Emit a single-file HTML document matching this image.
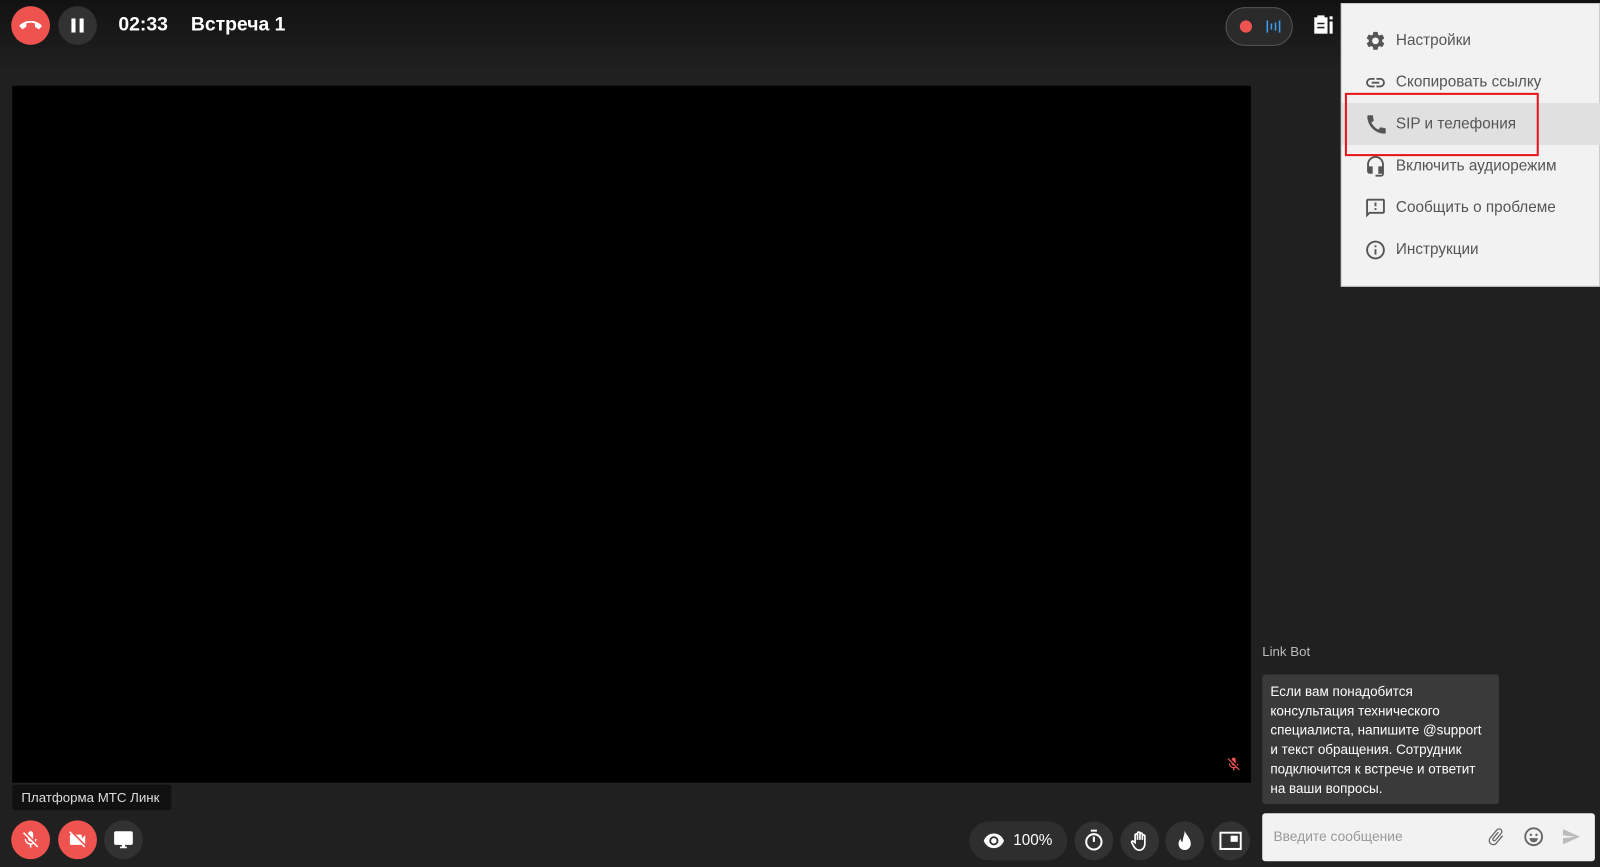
<!DOCTYPE html>
<html><head><meta charset="utf-8"><style>
*{margin:0;padding:0;box-sizing:border-box}
html,body{width:1600px;height:867px;overflow:hidden;background:#202020}
#w{position:absolute;left:0;top:0;width:1568px;height:850px;transform:scale(1.0204);transform-origin:0 0;font-family:"Liberation Sans",Arial,sans-serif}
.top{position:absolute;left:0;top:0;width:1568px;height:70px;background:linear-gradient(#121212,#202020)}
.ab{position:absolute}
.c{position:absolute;border-radius:50%;display:flex;align-items:center;justify-content:center}
.red{background:#ef5350}.dk{background:#323232}
.menu{position:absolute;left:1314px;top:3px;width:254px;height:278px;background:#f2f2f2;border:1px solid #ccc}
.mi{position:absolute;left:0;width:254px;height:41px;display:flex;align-items:center;font-size:15px;color:#555}
.mi svg{position:absolute;left:22px}
.mi span{position:absolute;left:53px}
</style></head><body><div id="w">
<div class="top"></div>
<div class="c red" style="left:11px;top:6px;width:38px;height:38px"><svg width="22" height="22" viewBox="0 0 24 24"><path fill="#fff" d="M12 9c-1.6 0-3.15.25-4.6.72v3.1c0 .39-.23.74-.56.9-.98.49-1.870 1.120-2.66 1.85-.18.18-.43.28-.7.28-.28 0-.53-.11-.71-.29L.29 13.08a.956.956 0 010-1.36C3.34 8.78 7.46 7 12 7s8.66 1.78 11.710 4.72c.18.18.29.44.29.71 0 .28-.11.53-.29.71l-2.48 2.48c-.18.18-.43.29-.71.29-.27 0-.52-.11-.7-.28a11.3 11.3 0 00-2.67-1.85.996.996 0 01-.56-.9v-3.1C15.15 9.25 13.6 9 12 9z"/></svg></div>
<div class="c dk" style="left:57px;top:6px;width:38px;height:38px"><svg width="14" height="14"><rect x="1" y="0" width="4" height="14" fill="#fff"/><rect x="9" y="0" width="4" height="14" fill="#fff"/></svg></div>
<div class="ab" style="left:116px;top:14px;color:#fff;font-weight:bold;font-size:19px">02:33</div>
<div class="ab" style="left:187px;top:14px;color:#fff;font-weight:bold;font-size:19px">Встреча 1</div>
<div class="ab" style="left:1201px;top:7px;width:66px;height:38px;border-radius:19px;background:#2a2a2a;border:1px solid #555"></div>
<div class="c" style="left:1215px;top:20px;width:12px;height:12px;background:#ef5350"></div>
<svg class="ab" style="left:1240px;top:18px" width="16" height="16"><g stroke="#3d9cf0" stroke-width="1.5"><line x1="2" y1="2" x2="2" y2="14"/><line x1="6" y1="5" x2="6" y2="11"/><line x1="10" y1="4" x2="10" y2="12"/><line x1="14" y1="2" x2="14" y2="14"/></g></svg>
<svg class="ab" style="left:1287px;top:15px" width="22" height="20"><rect x="1" y="2" width="13" height="16" fill="#fff"/><rect x="4" y="0" width="7" height="4" fill="#fff"/><g stroke="#222" stroke-width="1.5"><line x1="4" y1="8" x2="11" y2="8"/><line x1="4" y1="12" x2="11" y2="12"/></g><rect x="16" y="1" width="3" height="3" fill="#fff"/><rect x="16" y="6" width="3" height="12" fill="#fff"/></svg>
<div class="ab" style="left:12px;top:84px;width:1214px;height:683px;background:#000"></div>
<svg class="ab" style="left:1201px;top:741px" width="16" height="16" viewBox="0 0 24 24"><path fill="#ef5350" d="M19 11h-1.7c0 .74-.16 1.43-.43 2.05l1.23 1.23c.56-.98.9-2.090.9-3.28zm-4.02.17c0-.06.02-.11.02-.17V5c0-1.66-1.34-3-3-3S9 3.34 9 5v.18l5.98 5.99zM4.27 3L3 4.27l6.01 6.01V11c0 1.66 1.33 3 2.99 3 .22 0 .44-.03.65-.08l1.66 1.66c-.71.33-1.5.52-2.31.52-2.76 0-5.3-2.1-5.3-5.1H5c0 3.41 2.72 6.23 6 6.72V21h2v-3.28c.91-.13 1.77-.45 2.54-.9L19.73 21 21 19.73 4.27 3z"/></svg>
<div class="ab" style="left:12px;top:769px;width:156px;height:25px;background:#111;border-radius:3px;color:#ddd;font-size:13px;padding:5px 0 0 9px">Платформа МТС Линк</div>
<div class="c red" style="left:11px;top:804px;width:38px;height:38px"><svg width="20" height="20" viewBox="0 0 24 24"><path fill="#fff" d="M19 11h-1.7c0 .74-.16 1.43-.43 2.05l1.23 1.23c.56-.98.9-2.090.9-3.28zm-4.02.17c0-.06.02-.11.02-.17V5c0-1.66-1.34-3-3-3S9 3.34 9 5v.18l5.98 5.99zM4.27 3L3 4.27l6.01 6.01V11c0 1.66 1.33 3 2.99 3 .22 0 .44-.03.65-.08l1.66 1.66c-.71.33-1.5.52-2.31.52-2.76 0-5.3-2.1-5.3-5.1H5c0 3.41 2.72 6.23 6 6.72V21h2v-3.28c.91-.13 1.77-.45 2.54-.9L19.73 21 21 19.73 4.27 3z"/></svg></div>
<div class="c red" style="left:57px;top:804px;width:38px;height:38px"><svg width="20" height="20" viewBox="0 0 24 24"><path fill="#fff" d="M21 6.5l-4 4V7c0-.55-.45-1-1-1H9.82L21 17.18V6.5zM3.27 2L2 3.27 4.73 6H4c-.55 0-1 .45-1 1v10c0 .55.45 1 1 1h12c.21 0 .39-.08.54-.18L19.73 21 21 19.73 3.27 2z"/></svg></div>
<div class="c dk" style="left:102px;top:804px;width:38px;height:38px"><svg width="20" height="20" viewBox="0 0 24 24"><path fill="#fff" d="M21 2H3c-1.1 0-2 .9-2 2v12c0 1.1.9 2 2 2h7v2H8v2h8v-2h-2v-2h7c1.1 0 2-.9 2-2V4c0-1.1-.9-2-2-2z"/></svg></div>
<div class="ab" style="left:950px;top:805px;width:96px;height:38px;border-radius:19px;background:#2e2e2e;color:#fff;font-size:15px;padding:10px 0 0 43px">100%</div>
<svg class="ab" style="left:963px;top:815px" width="22" height="18" viewBox="0 0 24 20"><path fill="#fff" d="M12 2C7 2 2.7 5.1 1 10c1.7 4.9 6 8 11 8s9.3-3.1 11-8c-1.7-4.9-6-8-11-8zm0 13a5 5 0 110-10 5 5 0 010 10zm0-8a3 3 0 100 6 3 3 0 000-6z"/></svg>
<div class="c dk" style="left:1053px;top:805px;width:38px;height:38px"><svg width="20" height="22" viewBox="0 0 20 22"><rect x="7" y="0" width="6" height="2" fill="#fff"/><circle cx="10" cy="12" r="7.5" fill="none" stroke="#fff" stroke-width="2"/><line x1="10" y1="12" x2="10" y2="7" stroke="#fff" stroke-width="2"/></svg></div>
<div class="c dk" style="left:1098px;top:805px;width:38px;height:38px"><svg width="22" height="22" viewBox="0 0 24 24"><path fill="none" stroke="#fff" stroke-width="1.8" d="M7 13V6a1.3 1.3 0 012.6 0v5V4a1.3 1.3 0 012.6 0v7V5a1.3 1.3 0 012.6 0v6V7a1.3 1.3 0 012.6 0v8c0 4-2.5 7-6 7-2.5 0-4-1.2-5.500-3.5L3.5 14c-.7-1 .6-2.3 1.6-1.5L7 14z"/></svg></div>
<div class="c dk" style="left:1142px;top:805px;width:38px;height:38px"><svg width="16" height="20" viewBox="0 0 16 20"><path fill="#fff" d="M8 0C9 4 14 7 14 13a6 6 0 01-12 0c0-3 2-5 2-5 0 2 1 3 2 3 0-4 2-7 2-11z"/></svg></div>
<div class="c dk" style="left:1187px;top:805px;width:38px;height:38px"><svg width="22" height="18"><rect x="1" y="1" width="20" height="16" fill="none" stroke="#fff" stroke-width="2"/><rect x="11" y="4" width="7" height="6" fill="#fff"/></svg></div>
<div class="ab" style="left:1237px;top:631px;color:#bbb;font-size:13px">Link Bot</div>
<div class="ab" style="left:1237px;top:661px;width:232px;height:127px;background:#3a3a3a;border-radius:3px;color:#fff;font-size:13.2px;line-height:19px;padding:7px 8px">Если вам понадобится консультация технического специалиста, напишите @support и текст обращения. Сотрудник подключится к встрече и ответит на ваши вопросы.</div>
<div class="ab" style="left:1237px;top:797px;width:326px;height:47px;background:#f2f2f2;border-radius:3px;color:#999;font-size:13.5px;padding:15px 0 0 11px">Введите сообщение</div>
<svg class="ab" style="left:1456px;top:809px" width="20" height="22" viewBox="0 0 24 24"><path fill="#666" d="M16.5 6v11.5a4 4 0 01-8 0V5a2.5 2.5 0 015 0v10.5a1 1 0 01-2 0V6H10v9.5a2.5 2.5 0 005 0V5a4 4 0 00-8 0v12.5a5.5 5.5 0 0011 0V6h-1.5z" transform="rotate(40 12 12)"/></svg>
<svg class="ab" style="left:1492px;top:809px" width="22" height="22" viewBox="0 0 24 24"><circle cx="12" cy="12" r="9" fill="none" stroke="#666" stroke-width="2"/><circle cx="9" cy="10" r="1.3" fill="#666"/><circle cx="15" cy="10" r="1.3" fill="#666"/><path d="M7.5 13.5h9a4.5 4.5 0 01-9 0z" fill="#666"/></svg>
<svg class="ab" style="left:1531px;top:812px" width="18" height="16" viewBox="0 0 24 20"><path fill="#bbb" d="M1 20l22-10L1 0v8l16 2-16 2z"/></svg>
<div class="menu">
<div class="mi" style="top:15px"><svg width="22" height="22" viewBox="0 0 24 24"><path fill="#555" d="M19.14 12.94c.04-.3.06-.61.06-.94 0-.32-.02-.64-.07-.94l2.03-1.58a.49.49 0 00.12-.61l-1.92-3.32a.488.488 0 00-.59-.22l-2.39.96c-.5-.38-1.03-.7-1.62-.94l-.36-2.54a.484.484 0 00-.48-.41h-3.84c-.24 0-.43.17-.47.41l-.36 2.54c-.59.24-1.13.57-1.62.94l-2.39-.96c-.22-.08-.47 0-.59.22L2.74 8.87c-.12.21-.08.47.12.61l2.030 1.58c-.05.3-.09.63-.09.94s.02.64.07.94l-2.03 1.58a.49.49 0 00-.12.61l1.92 3.32c.12.22.37.29.59.22l2.39-.96c.5.38 1.03.7 1.62.94l.36 2.54c.05.24.24.41.48.41h3.84c.24 0 .44-.17.47-.41l.36-2.54c.59-.24 1.13-.56 1.62-.94l2.39.96c.22.08.47 0 .59-.22l1.92-3.32c.12-.22.07-.47-.12-.61l-2.01-1.58zM12 15.6c-1.98 0-3.6-1.62-3.6-3.6s1.62-3.6 3.6-3.6 3.6 1.62 3.6 3.6-1.62 3.6-3.6 3.6z"/></svg><span>Настройки</span></div>
<div class="mi" style="top:56px"><svg width="22" height="22" viewBox="0 0 24 24"><path fill="#555" d="M3.9 12c0-1.71 1.39-3.1 3.1-3.1h4V7H7c-2.76 0-5 2.24-5 5s2.24 5 5 5h4v-1.9H7c-1.71 0-3.1-1.39-3.1-3.1zM8 13h8v-2H8v2zm9-6h-4v1.9h4c1.71 0 3.1 1.39 3.1 3.1s-1.39 3.1-3.1 3.1h-4V17h4c2.76 0 5-2.24 5-5s-2.24-5-5-5z"/></svg><span>Скопировать ссылку</span></div>
<div class="mi" style="top:97px;background:#e0e0e0"><svg width="24" height="24" viewBox="0 0 24 24"><path fill="#555" d="M20.01 15.38c-1.23 0-2.42-.2-3.53-.56a.977.977 0 00-1.01.24l-1.57 1.97c-2.83-1.35-5.48-3.9-6.89-6.83l1.95-1.66c.27-.28.35-.67.24-1.02-.37-1.11-.56-2.3-.56-3.53 0-.54-.45-.99-.99-.99H4.19C3.65 3 3 3.24 3 3.99 3 13.28 10.73 21 20.01 21c.71 0 .99-.63.99-1.18v-3.45c0-.54-.45-.99-.99-.99z"/></svg><span>SIP и телефония</span></div>
<div class="mi" style="top:138px"><svg width="22" height="22" viewBox="0 0 24 24"><path fill="#555" d="M12 1a9 9 0 00-9 9v7c0 1.66 1.34 3 3 3h3v-8H5v-2c0-3.87 3.13-7 7-7s7 3.13 7 7v2h-4v8h4v1h-7v2h6c1.66 0 3-1.34 3-3V10a9 9 0 00-9-9z"/></svg><span>Включить аудиорежим</span></div>
<div class="mi" style="top:179px"><svg width="22" height="22" viewBox="0 0 24 24"><path fill="#555" d="M20 2H4c-1.1 0-2 .9-2 2v18l4-4h14c1.1 0 2-.9 2-2V4c0-1.1-.9-2-2-2zm0 14H5.17L4 17.170V4h16v12zM11 12h2v2h-2zm0-6h2v4h-2z"/></svg><span>Сообщить о проблеме</span></div>
<div class="mi" style="top:220px"><svg width="22" height="22" viewBox="0 0 24 24"><path fill="#555" d="M11 7h2v2h-2zm0 4h2v6h-2zm1-9C6.48 2 2 6.48 2 12s4.48 10 10 10 10-4.48 10-10S17.52 2 12 2zm0 18c-4.41 0-8-3.59-8-8s3.59-8 8-8 8 3.59 8 8-3.59 8-8 8z"/></svg><span>Инструкции</span></div>
</div>
<div class="ab" style="left:1318px;top:91px;width:190px;height:62px;border:2px solid #e8141b"></div>
</div></body></html>
